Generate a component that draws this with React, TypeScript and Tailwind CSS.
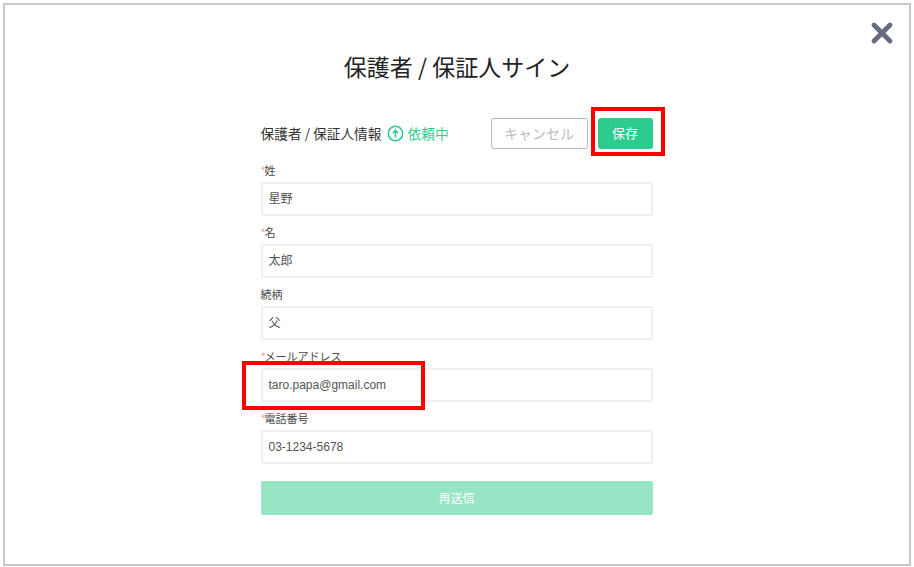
import React from "react";

const font = { fontFamily: '"Noto Sans CJK JP", "Liberation Sans", sans-serif' };

function Field({ label, value, required = true }: { label: string; value: string; required?: boolean }) {
  return (
    <div className="flex flex-col mb-[6px]">
      <div className="h-[22px] pb-[2px] flex items-center text-[11px] text-[#4a4a4a]">
        {required && <span className="text-[#f79c9c] w-[4px]">*</span>}
        <span>{label}</span>
      </div>
      <div className="h-[34px] border-2 border-[#f0f0f0] rounded-[2px] px-[6px] flex items-center text-[12px] text-[#555555] bg-white">
        <span className="font-['Liberation_Sans','Noto_Sans_CJK_JP',sans-serif] -mt-[1px]">{value}</span>
      </div>
    </div>
  );
}

export default function App() {
  return (
    <div className="w-[914px] h-[567px] bg-white p-[3px]" style={font}>
      <div className="relative w-[908px] h-[563px] border-2 border-[#c9c9c9] flex flex-col items-center">
        <svg className="absolute right-[15px] top-[16px]" width="24" height="24" viewBox="0 0 24 24">
          <path d="M4 4L20 20M20 4L4 20" stroke="#666b80" strokeWidth="4.8" strokeLinecap="round" />
        </svg>
        <h1 className="mt-[44px] h-[34px] leading-[34px] text-[23px] text-[#222222] font-normal">保護者 / 保証人サイン</h1>
        <div className="w-[392px] mt-[34px] -ml-[1px]">
          <div className="flex items-center h-[32px] mb-[11px]">
            <span className="text-[13.7px] text-[#333333]">保護者 / 保証人情報</span>
            <svg className="ml-[5px]" width="17" height="17" viewBox="0 0 17 17" fill="none">
              <circle cx="8.5" cy="8.5" r="7.2" stroke="#2ecc8f" strokeWidth="1.6" />
              <path d="M8.5 12.5V5.5M5.8 8.2L8.5 5.2L11.2 8.2" stroke="#2ecc8f" strokeWidth="1.6" />
            </svg>
            <span className="ml-[4px] text-[13.7px] text-[#2ecc8f]">依頼中</span>
            <div className="ml-auto flex items-center gap-[10px]">
              <div className="relative w-[97px] h-[31px] rounded-[3px] border border-[#b9b9b9] flex items-center justify-center text-[14px] text-[#bdbdbd]">
                キャンセル
              </div>
              <div className="relative w-[55px] h-[31px] rounded-[3px] bg-[#2ccb8e] flex items-center justify-center text-[13px] text-white">
                保存
                <div className="absolute -left-[7px] -top-[11px] -right-[12px] -bottom-[7px] border-[4px] border-[#fe0000]" />
              </div>
            </div>
          </div>
          <Field label="姓" value="星野" />
          <Field label="名" value="太郎" />
          <Field label="続柄" value="父" required={false} />
          <div className="relative">
            <Field label="メールアドレス" value="taro.papa@gmail.com" />
            <div className="absolute -left-[19px] top-[15px] w-[183px] h-[49px] border-[4px] border-[#fe0000]" />
          </div>
          <Field label="電話番号" value="03-1234-5678" />
          <div className="mt-[17px] h-[34px] rounded-[2px] bg-[#96e6c6] flex items-center justify-center text-[12px] text-white">
            再送信
          </div>
        </div>
      </div>
    </div>
  );
}
